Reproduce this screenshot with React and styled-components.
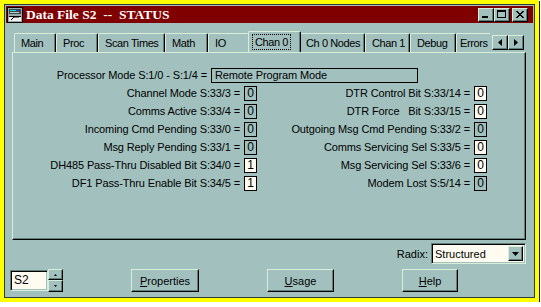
import styled, { createGlobalStyle } from 'styled-components'

const FACE = '#a2c1be'
const LIGHT = '#d8eed8'
const SHADOW = '#61807c'
const CREAM = '#fffbf0'

const GlobalStyle = createGlobalStyle`
    html, body {
        margin: 0;
        padding: 0;
        background: #ffffff;
    }
    body {
        font-family: "Liberation Sans", Arial, sans-serif;
        font-size: 11px;
        color: #000;
    }
`

const Frame = styled.div`
    width: 539px;
    height: 302px;
    box-sizing: border-box;
    border: 4px solid #ffff00;
    box-shadow: 1px 1px 0 #1c1c1c;
`

const Window = styled.div`
    height: 100%;
    box-sizing: border-box;
    border: 1px solid #2e3c3a;
    padding: 1px;
    background: ${FACE};
    display: flex;
    flex-direction: column;
`

const TitleBar = styled.div`
    height: 17px;
    flex-shrink: 0;
    background: #800000;
    display: flex;
    align-items: center;
    padding: 0 5px 0 1px;
`

const TitleText = styled.div`
    margin-left: 3px;
    font-family: "Liberation Serif", "Times New Roman", serif;
    font-weight: bold;
    font-size: 13.5px;
    color: #fff;
    white-space: pre;
`

const Controls = styled.div`
    margin-left: auto;
    display: flex;
    gap: ${(p) => p.$gap || 0}px;
`

const raised = `
    box-sizing: border-box;
    background: ${FACE};
    border-top: 1px solid ${LIGHT};
    border-left: 1px solid ${LIGHT};
    border-right: 1px solid #000;
    border-bottom: 1px solid #000;
    box-shadow: inset -1px -1px 0 ${SHADOW};
`

const sunken = `
    box-sizing: border-box;
    background: ${CREAM};
    border-top: 1px solid ${SHADOW};
    border-left: 1px solid ${SHADOW};
    border-right: 1px solid ${LIGHT};
    border-bottom: 1px solid ${LIGHT};
    box-shadow: inset 1px 1px 0 #000, inset -1px -1px 0 ${FACE};
`

const CtlButton = styled.div`
    ${raised}
    width: 16px;
    height: 14px;
    display: flex;
    align-items: center;
    justify-content: center;
`

const Body = styled.div`
    flex: 1;
    display: flex;
    flex-direction: column;
    padding: 0 7px 0 6px;
`

const TabHeader = styled.div`
    margin-top: 8px;
    height: 21px;
    display: flex;
    align-items: flex-end;
`

const TabList = styled.div`
    width: 478px;
    height: 21px;
    overflow: hidden;
    display: flex;
    align-items: flex-end;
    padding-left: 2px;
    box-sizing: border-box;
`

const Tab = styled.div`
    flex-shrink: 0;
    box-sizing: border-box;
    width: ${(p) => (p.$active ? p.$width + 4 : p.$width)}px;
    height: ${(p) => (p.$active ? 22 : 19)}px;
    margin: ${(p) => (p.$active ? '0 -2px -1px -2px' : '0')};
    position: relative;
    z-index: ${(p) => (p.$active ? 1 : 0)};
    background: ${FACE};
    border-top: 1px solid ${LIGHT};
    border-left: 1px solid ${LIGHT};
    border-right: 1px solid #000;
    border-radius: 2px 2px 0 0;
    box-shadow: inset -1px 0 0 ${SHADOW};
    padding-left: ${(p) => p.$pad ?? 6}px;
    padding-bottom: ${(p) => (p.$active ? 2 : 0)}px;
    display: flex;
    align-items: center;
    white-space: nowrap;
    letter-spacing: -0.4px;
`

const Focus = styled.span`
    border: 1px dotted #000;
    padding: 1px 2px;
    margin-left: -3px;
`

const Arrows = styled.div`
    display: flex;
    margin: 0 0 2px 2px;
`

const ArrowButton = styled.div`
    ${raised}
    width: 16px;
    height: 15px;
    display: flex;
    align-items: center;
    justify-content: center;
`

const Panel = styled.div`
    height: 188px;
    box-sizing: border-box;
    border-top: 1px solid ${LIGHT};
    border-left: 1px solid ${LIGHT};
    border-right: 1px solid #000;
    border-bottom: 1px solid #000;
    box-shadow: inset -1px -1px 0 ${SHADOW};
    padding-top: 13px;
    letter-spacing: -0.12px;
`

const ProcRow = styled.div`
    height: 18px;
    display: flex;
    align-items: center;
`

const ProcLabel = styled.div`
    width: 194px;
    text-align: right;
    margin-right: 4px;
    white-space: pre;
`

const TextBox = styled.div`
    width: 207px;
    height: 15px;
    box-sizing: border-box;
    border: 1px solid #000;
    padding-left: 3px;
    line-height: 13px;
`

const Grid = styled.div`
    display: grid;
    grid-template-columns: 244px 230px;
    grid-auto-rows: 18px;
`

const Cell = styled.div`
    display: flex;
    justify-content: flex-end;
    align-items: center;
    gap: 4px;
    white-space: pre;
`

const BitBox = styled.div`
    width: 13px;
    height: 15px;
    box-sizing: border-box;
    border: 1px solid #000;
    background: ${(p) => (p.$editable ? CREAM : 'transparent')};
    text-align: center;
    line-height: 13px;
    font-size: 12px;
`

const RadixRow = styled.div`
    margin-top: 3px;
    height: 21px;
    display: flex;
    justify-content: flex-end;
    align-items: center;
    gap: 3px;
`

const Select = styled.div`
    ${sunken}
    width: 95px;
    height: 21px;
    padding: 2px;
    display: flex;
    align-items: stretch;
`

const SelectText = styled.div`
    flex: 1;
    padding-left: 1px;
    line-height: 16px;
`

const DropButton = styled.div`
    ${raised}
    width: 15px;
    display: flex;
    align-items: center;
    justify-content: center;
`

const ButtonRow = styled.div`
    margin: 5px 0 0 -2px;
    height: 23px;
    display: flex;
    align-items: flex-start;
    gap: 68px;
`

const Spinner = styled.div`
    display: flex;
`

const SpinInput = styled.div`
    ${sunken}
    width: 38px;
    height: 21px;
    margin-top: 1px;
    padding-left: 3px;
    line-height: 19px;
    font-size: 12px;
`

const SpinButtons = styled.div`
    display: flex;
    flex-direction: column;
`

const SpinButton = styled.div`
    ${raised}
    width: 15px;
    height: ${(p) => p.$h}px;
    display: flex;
    align-items: center;
    justify-content: center;
`

const Button = styled.div`
    ${raised}
    width: ${(p) => p.$width}px;
    height: 23px;
    display: flex;
    align-items: center;
    justify-content: center;
`

const Triangle = ({ dir, size = 4 }) => {
    const s = size
    const pts = {
        down: `0,0 ${s * 2 - 1},0 ${s - 0.5},${s}`,
        up: `0,${s} ${s * 2 - 1},${s} ${s - 0.5},0`,
        left: `${s},0 ${s},${s * 2 - 1} 0,${s - 0.5}`,
        right: `0,0 0,${s * 2 - 1} ${s},${s - 0.5}`,
    }[dir]
    const horiz = dir === 'left' || dir === 'right'
    return (
        <svg width={horiz ? s : s * 2 - 1} height={horiz ? s * 2 - 1 : s}>
            <polygon points={pts} fill="#000" />
        </svg>
    )
}

const FileIcon = () => (
    <svg width="16" height="16" viewBox="0 0 16 16">
        <rect x="0.5" y="0.5" width="15" height="15" fill="#9aa8a8" stroke="#000" />
        <rect x="2" y="2" width="12" height="5" fill="#3c4848" />
        <rect x="3" y="3" width="6" height="1" fill="#00e0e0" />
        <rect x="9" y="3" width="4" height="1" fill="#2040c0" />
        <rect x="3" y="5" width="9" height="1" fill="#c0d0d0" />
        <rect x="2" y="9" width="12" height="5" fill="#f0f0f0" />
        <rect x="2" y="9" width="12" height="1" fill="#000" />
        <path d="M4 13 L7 10 L12 10" stroke="#000" fill="none" />
    </svg>
)

const tabs = [
    ['Main', 42],
    ['Proc', 42],
    ['Scan Times', 67],
    ['Math', 43],
    ['IO', 42],
    ['Chan 0', 49],
    ['Ch 0 Nodes', 66],
    ['Chan 1', 45],
    ['Debug', 46],
    ['Errors', 50, 3],
]

const rows = [
    ['Channel Mode S:33/3 =', '0', false, 'DTR Control Bit S:33/14 =', '0', true],
    ['Comms Active S:33/4 =', '0', false, 'DTR Force   Bit S:33/15 =', '0', true],
    ['Incoming Cmd Pending S:33/0 =', '0', false, 'Outgoing Msg Cmd Pending S:33/2 =', '0', false],
    ['Msg Reply Pending S:33/1 =', '0', false, 'Comms Servicing Sel S:33/5 =', '0', true],
    ['DH485 Pass-Thru Disabled Bit S:34/0 =', '1', true, 'Msg Servicing Sel S:33/6 =', '0', true],
    ['DF1 Pass-Thru Enable Bit S:34/5 =', '1', true, 'Modem Lost S:5/14 =', '0', false],
]

const App = () => {
    return (
        <>
            <GlobalStyle />
            <Frame>
                <Window>
                    <TitleBar>
                        <FileIcon />
                        <TitleText>Data File S2  --  STATUS</TitleText>
                        <Controls $gap={2}>
                            <Controls>
                                <CtlButton>
                                    <svg width="10" height="9">
                                        <rect x="1" y="6" width="6" height="2" fill="#000" />
                                    </svg>
                                </CtlButton>
                                <CtlButton>
                                    <svg width="10" height="9">
                                        <rect x="0.5" y="0.5" width="8" height="7" fill="none" stroke="#000" />
                                        <rect x="0" y="0" width="9" height="2" fill="#000" />
                                    </svg>
                                </CtlButton>
                            </Controls>
                            <CtlButton>
                                <svg width="10" height="8">
                                    <path d="M1 0 L8 7 M2 0 L9 7 M8 0 L1 7 M9 0 L2 7" stroke="#000" strokeWidth="1" />
                                </svg>
                            </CtlButton>
                        </Controls>
                    </TitleBar>
                    <Body>
                        <TabHeader>
                            <TabList>
                                {tabs.map(([name, w, pad]) => {
                                    const active = name === 'Chan 0'
                                    return (
                                        <Tab key={name} $width={w} $pad={pad} $active={active}>
                                            {active ? <Focus>{name}</Focus> : name}
                                        </Tab>
                                    )
                                })}
                            </TabList>
                            <Arrows>
                                <ArrowButton>
                                    <Triangle dir="left" />
                                </ArrowButton>
                                <ArrowButton>
                                    <Triangle dir="right" />
                                </ArrowButton>
                            </Arrows>
                        </TabHeader>
                        <Panel>
                            <ProcRow>
                                <ProcLabel>Processor Mode S:1/0 - S:1/4 =</ProcLabel>
                                <TextBox>Remote Program Mode</TextBox>
                            </ProcRow>
                            <Grid>
                                {rows.map((r) => [
                                    <Cell key={r[0]}>
                                        {r[0]}
                                        <BitBox $editable={r[2]}>{r[1]}</BitBox>
                                    </Cell>,
                                    <Cell key={r[3]}>
                                        {r[3]}
                                        <BitBox $editable={r[5]}>{r[4]}</BitBox>
                                    </Cell>,
                                ])}
                            </Grid>
                        </Panel>
                        <RadixRow>
                            Radix:
                            <Select>
                                <SelectText>Structured</SelectText>
                                <DropButton>
                                    <Triangle dir="down" />
                                </DropButton>
                            </Select>
                        </RadixRow>
                        <ButtonRow>
                            <Spinner>
                                <SpinInput>S2</SpinInput>
                                <SpinButtons>
                                    <SpinButton $h={11}>
                                        <Triangle dir="up" size={2} />
                                    </SpinButton>
                                    <SpinButton $h={12}>
                                        <Triangle dir="down" size={2} />
                                    </SpinButton>
                                </SpinButtons>
                            </Spinner>
                            <Button $width={68}>
                                <span><u>P</u>roperties</span>
                            </Button>
                            <Button $width={67}>
                                <span><u>U</u>sage</span>
                            </Button>
                            <Button $width={56}>
                                <span><u>H</u>elp</span>
                            </Button>
                        </ButtonRow>
                    </Body>
                </Window>
            </Frame>
        </>
    )
}

export default App
